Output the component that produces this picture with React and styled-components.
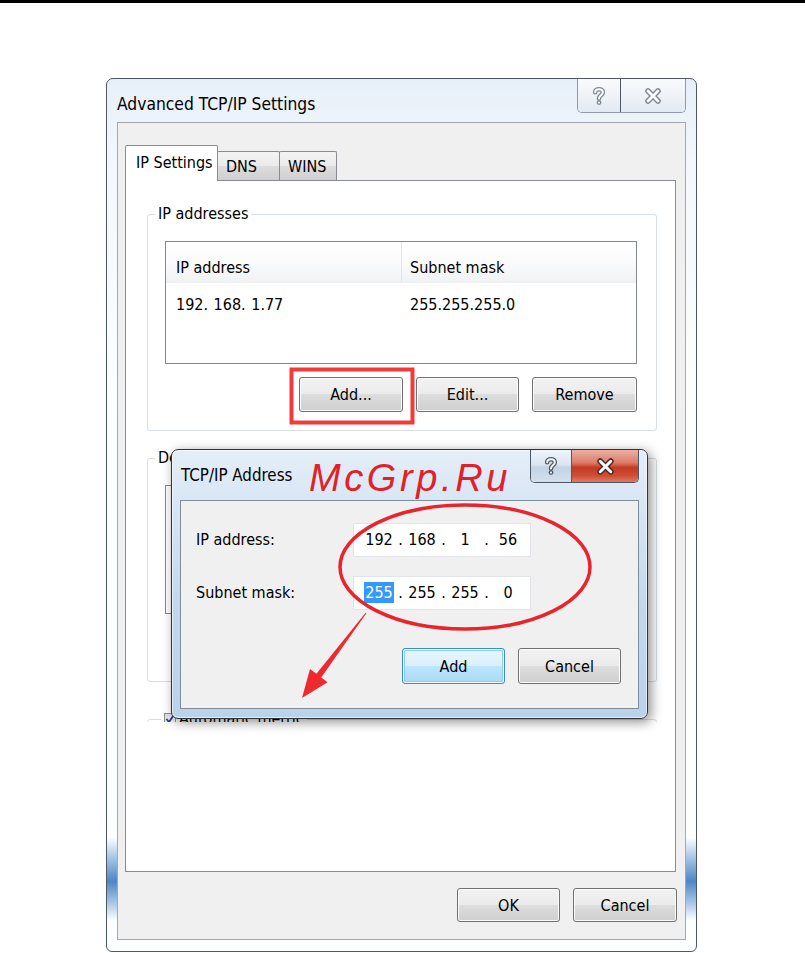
import React from "react";
import styled, { createGlobalStyle, css } from "styled-components";

const UI = `"DejaVu Sans Condensed", "Liberation Sans", sans-serif`;
const FS = 16;

const GlobalStyle = createGlobalStyle`
  html, body { margin: 0; padding: 0; background: #fff; }
  body { font-family: ${UI}; color: #000; }
  * { box-sizing: border-box; }
`;

const Page = styled.div`
  position: relative;
  width: 805px;
  height: 953px;
  overflow: hidden;
  background: #fff;
`;

const TopRule = styled.div`
  height: 3px;
  background: #000;
`;

const Window = styled.div`
  margin: 75px 0 0 106px;
  width: 591px;
  border: 1px solid #4e5863;
  border-radius: 7px 7px 6px 6px;
  padding: 0 10px 11px 10px;
  background: linear-gradient(
    180deg,
    #e6eff8 0%,
    #f4f8fc 10%,
    #fdfeff 40%,
    #fdfeff 87%,
    #9fc1e3 89.5%,
    #4f86c2 92%,
    #a9c7e6 94.5%,
    #fdfeff 96.5%
  );
`;

const TitleBar = styled.div`
  height: 43px;
  display: flex;
  justify-content: space-between;
  align-items: flex-start;
`;

const Title = styled.div`
  padding-top: 14px;
  line-height: 22px;
  font-size: ${(p) => p.$size || 17.3}px;
  white-space: nowrap;
`;

const CaptionGroup = styled.div`
  display: flex;
  height: ${(p) => p.$h}px;
  margin-right: ${(p) => p.$mr || 0}px;
  border: 1px solid ${(p) => (p.$active ? "#4c5866" : "#8f9aa6")};
  border-top: none;
  border-radius: 0 0 5px 5px;
  overflow: hidden;
`;

const CaptionButton = styled.div`
  width: ${(p) => p.$w}px;
  display: flex;
  align-items: center;
  justify-content: center;
  background: ${(p) =>
    p.$red
      ? "linear-gradient(180deg, #eab0a4 0%, #dd7b67 40%, #c43a22 55%, #cf4d36 80%, #e07a62 100%)"
      : p.$active
      ? "linear-gradient(180deg, #eef4fa 0%, #dbe6f1 45%, #c3d3e4 55%, #d3e0ed 100%)"
      : "linear-gradient(180deg, #f8fbfd 0%, #eef3f8 50%, #e2e9f1 100%)"};
  & + & {
    border-left: 1px solid ${(p) => (p.$active ? "#4c5866" : "#9aa5b0")};
  }
`;

const Client = styled.div`
  border: 1px solid #a2a9b1;
  background: #f0f0f0;
  padding: 22px 9px 17px 7px;
`;

const TabStrip = styled.div`
  display: flex;
  align-items: flex-end;
  position: relative;
  z-index: 1;
  margin-bottom: -1px;
  height: 36px;
`;

const Tab = styled.div`
  width: ${(p) => p.$w}px;
  border: 1px solid #898c95;
  border-bottom: none;
  border-radius: 2px 2px 0 0;
  font-size: ${FS}px;
  white-space: nowrap;
  ${(p) =>
    p.$active
      ? css`
          height: 36px;
          background: #fff;
          padding: 6px 0 0 10px;
          line-height: 22px;
        `
      : css`
          height: 29px;
          margin-bottom: 1px;
          margin-left: -1px;
          background: linear-gradient(180deg, #f3f3f3 0%, #ebebeb 50%, #dddddd 51%, #cfcfcf 100%);
          padding: 4px 0 0 8px;
          line-height: 22px;
        `}
`;

const TabPanel = styled.div`
  height: 692px;
  border: 1px solid #898c95;
  background: #fff;
`;

const PanelClip = styled.div`
  height: 541px;
  overflow: hidden;
  padding: 23px 18px 0 21px;
  display: flex;
  flex-direction: column;
`;

const Group = styled.fieldset`
  margin: ${(p) => p.$mt || 0}px 0 0 0;
  padding: 17px 19px 18px 17px;
  border: 1px solid #d5dfe5;
  border-radius: 3px;
  min-width: 0;
`;

const Legend = styled.legend`
  margin-left: ${(p) => p.$ml ?? -10}px;
  padding: 0 3px;
  line-height: 20px;
  font-size: ${FS}px;
  display: flex;
  align-items: center;
  gap: 3px;
`;

const ListView = styled.div`
  height: ${(p) => p.$h}px;
  border: 1px solid #828790;
  background: #fff;
`;

const ListHeader = styled.div`
  display: grid;
  grid-template-columns: 235px 1fr;
  height: 41px;
  background: linear-gradient(180deg, #ffffff 0%, #fbfbfc 50%, #f1f2f4 100%);
  border-bottom: 1px solid #eef0f2;
`;

const HeaderCell = styled.div`
  padding: 16px 0 0 ${(p) => p.$pl}px;
  line-height: 19px;
  font-size: ${FS}px;
  & + & {
    border-left: 1px solid #e2e4e7;
  }
`;

const ListRow = styled.div`
  display: grid;
  grid-template-columns: 235px 1fr;
  padding-top: 12px;
  line-height: 19px;
  font-size: ${FS}px;
`;

const RowCell = styled.div`
  padding-left: ${(p) => p.$pl}px;
  word-spacing: 1px;
`;

const ButtonRow = styled.div`
  display: flex;
  justify-content: flex-end;
  gap: 13px;
  margin-top: ${(p) => p.$mt || 0}px;
  padding-right: ${(p) => p.$pr || 0}px;
`;

const Button = styled.button`
  width: ${(p) => p.$w}px;
  height: ${(p) => p.$h || 35}px;
  padding: 0;
  font-family: ${UI};
  font-size: ${FS}px;
  color: #000;
  border: 1px solid #707070;
  border-radius: 3px;
  background: linear-gradient(180deg, #f2f2f2 0%, #ebebeb 49%, #dddddd 50%, #cfcfcf 100%);
  box-shadow: inset 0 0 0 1px #fcfcfc;
  ${(p) =>
    p.$default &&
    css`
      border-color: #3c8ec8;
      background: linear-gradient(180deg, #eaf6fd 0%, #d9f0fc 49%, #bee6fd 50%, #a7d9f5 100%);
      box-shadow: inset 0 0 0 1px #f4fbff, inset 0 0 0 2px #8fd0f2;
    `}
`;

const Footer = styled.div`
  display: flex;
  justify-content: flex-end;
  gap: 13px;
  margin: 16px -1px 0 0;
`;

const CheckBox = styled.span`
  width: 12px;
  height: 13px;
  border: 1px solid #8f8f8f;
  background: linear-gradient(135deg, #dcdcdc, #fff);
  display: inline-flex;
  align-items: center;
  justify-content: center;
`;

/* ---------- TCP/IP Address dialog ---------- */

const SubDialog = styled.div`
  position: absolute;
  left: 171px;
  top: 449px;
  width: 477px;
  height: 270px;
  border: 1px solid #2f3338;
  border-radius: 7px;
  padding: 0 8px 9px 8px;
  background: linear-gradient(180deg, #e4eef8 0%, #d2e2f2 30%, #c2d7ec 60%, #bad2ea 100%);
  box-shadow: 3px 3px 12px rgba(0, 0, 0, 0.45), inset 0 0 0 1px rgba(255, 255, 255, 0.6);
  display: flex;
  flex-direction: column;
`;

const SubTitleBar = styled.div`
  height: 50px;
  display: flex;
  justify-content: space-between;
  align-items: flex-start;
  padding-left: 1px;
`;

const SubClient = styled.div`
  flex: 1;
  border: 1px solid #7e8e9f;
  background: #f0f0f0;
  padding: 22px 17px 0 15px;
`;

const FieldGrid = styled.div`
  display: grid;
  grid-template-columns: 157px 178px;
  row-gap: 19px;
  align-items: center;
`;

const FieldLabel = styled.div`
  font-size: ${FS}px;
  line-height: 22px;
`;

const IpBox = styled.div`
  width: 178px;
  height: 34px;
  background: #fff;
  border: 1px solid #e3e4ea;
  display: flex;
  align-items: center;
  padding-left: 8px;
  font-size: ${FS}px;
  line-height: 22px;
`;

const Octet = styled.span`
  width: 34px;
  text-align: center;
`;

const Dot = styled.span`
  width: 9px;
  text-align: center;
`;

const Selected = styled.span`
  background: #3399ff;
  color: #fff;
  padding: 1px 1px;
`;

const Watermark = styled.div`
  position: absolute;
  left: 309px;
  top: 459px;
  font-family: "Liberation Sans", Arial, sans-serif;
  font-style: italic;
  font-size: 38px;
  line-height: 38px;
  letter-spacing: 3.6px;
  color: #e3202a;
  white-space: nowrap;
`;

const Overlay = styled.svg`
  position: absolute;
  left: 0;
  top: 0;
  pointer-events: none;
`;

/* ---------- icons ---------- */

const HelpGlyph = ({ outline = "#6b7683", fill = "#fff", s = 1 }) => (
  <svg width={14 * s} height={20 * s} viewBox="0 0 14 20">
    <path d="M3.2 6.2 C3.2 2.2 10.8 2.2 10.8 6.2 C10.8 9.4 7 9.2 7 12.6" fill="none" stroke={outline} strokeWidth="4.6" strokeLinecap="round" />
    <circle cx="7" cy="16.6" r="2.4" fill={outline} />
    <path d="M3.2 6.2 C3.2 2.2 10.8 2.2 10.8 6.2 C10.8 9.4 7 9.2 7 12.6" fill="none" stroke={fill} strokeWidth="2" strokeLinecap="round" />
    <circle cx="7" cy="16.6" r="1.1" fill={fill} />
  </svg>
);

const CloseGlyph = ({ outline = "#6b7683", fill = "#fff", size = 14 }) => (
  <svg width={size + 4} height={size + 2} viewBox="0 0 18 16">
    <path d="M4 3 L14 13 M14 3 L4 13" fill="none" stroke={outline} strokeWidth="5.6" strokeLinecap="round" />
    <path d="M4 3 L14 13 M14 3 L4 13" fill="none" stroke={fill} strokeWidth="2.8" strokeLinecap="round" />
  </svg>
);

const CheckMark = () => (
  <svg width="10" height="10" viewBox="0 0 10 10">
    <path d="M1.5 5 L4 8 L8.5 1.5" fill="none" stroke="#1f3f8f" strokeWidth="1.8" />
  </svg>
);

const IpValue = ({ parts, selectFirst }) => (
  <IpBox>
    {parts.map((p, i) => (
      <React.Fragment key={i}>
        {i > 0 && <Dot>.</Dot>}
        <Octet>{i === 0 && selectFirst ? <Selected>{p}</Selected> : p}</Octet>
      </React.Fragment>
    ))}
  </IpBox>
);

export default function App() {
  return (
    <>
      <GlobalStyle />
      <Page>
        <TopRule />
        <Window>
          <TitleBar>
            <Title>Advanced TCP/IP Settings</Title>
            <CaptionGroup $h={34}>
              <CaptionButton $w={42}>
                <HelpGlyph outline="#7d8793" />
              </CaptionButton>
              <CaptionButton $w={65}>
                <CloseGlyph outline="#7d8793" />
              </CaptionButton>
            </CaptionGroup>
          </TitleBar>
          <Client>
            <TabStrip>
              <Tab $active $w={93}>IP Settings</Tab>
              <Tab $w={63}>DNS</Tab>
              <Tab $w={58}>WINS</Tab>
            </TabStrip>
            <TabPanel>
              <PanelClip>
                <Group>
                  <Legend>IP addresses</Legend>
                  <ListView $h={123}>
                    <ListHeader>
                      <HeaderCell $pl={10}>IP address</HeaderCell>
                      <HeaderCell $pl={8}>Subnet mask</HeaderCell>
                    </ListHeader>
                    <ListRow>
                      <RowCell $pl={10}>192. 168. 1.77</RowCell>
                      <RowCell $pl={9}>255.255.255.0</RowCell>
                    </ListRow>
                  </ListView>
                  <ButtonRow $mt={13}>
                    <Button $w={104}>Add...</Button>
                    <Button $w={103}>Edit...</Button>
                    <Button $w={105}>Remove</Button>
                  </ButtonRow>
                </Group>
                <Group $mt={17}>
                  <Legend>Default gateways:</Legend>
                  <ListView $h={129} />
                  <ButtonRow $mt={14}>
                    <Button $w={104}>Add...</Button>
                    <Button $w={103}>Edit...</Button>
                    <Button $w={105}>Remove</Button>
                  </ButtonRow>
                </Group>
                <Group $mt={27}>
                  <Legend $ml={-4}>
                    <CheckBox>
                      <CheckMark />
                    </CheckBox>
                    Automatic metric
                  </Legend>
                </Group>
              </PanelClip>
            </TabPanel>
            <Footer>
              <Button $w={103} $h={34}>OK</Button>
              <Button $w={104} $h={34}>Cancel</Button>
            </Footer>
          </Client>
        </Window>

        <SubDialog>
          <SubTitleBar>
            <Title $size={16.8}>TCP/IP Address</Title>
            <CaptionGroup $h={33} $active>
              <CaptionButton $w={40} $active>
                <HelpGlyph outline="#4f5a66" fill="#f4f6f8" />
              </CaptionButton>
              <CaptionButton $w={67} $active $red>
                <CloseGlyph outline="#4a2a24" fill="#fff" size={15} />
              </CaptionButton>
            </CaptionGroup>
          </SubTitleBar>
          <SubClient>
            <FieldGrid>
              <FieldLabel>IP address:</FieldLabel>
              <IpValue parts={["192", "168", "1", "56"]} />
              <FieldLabel>Subnet mask:</FieldLabel>
              <IpValue parts={["255", "255", "255", "0"]} selectFirst />
            </FieldGrid>
            <ButtonRow $mt={38}>
              <Button $w={103} $h={36} $default>Add</Button>
              <Button $w={103} $h={36}>Cancel</Button>
            </ButtonRow>
          </SubClient>
        </SubDialog>

        <Watermark>McGrp.Ru</Watermark>

        <Overlay width="805" height="953" viewBox="0 0 805 953">
          <rect x="291.5" y="369.5" width="121" height="53" fill="none" stroke="#f23a3a" strokeWidth="4" />
          <ellipse cx="465" cy="567" rx="125" ry="62" fill="none" stroke="#e8242c" strokeWidth="3.5" />
          <polygon
            points="365.6,612.7 316.4,673.8 310,669 302,698 327.6,682.2 321.2,677.4 366.4,613.3"
            fill="#ee2a2f"
          />
        </Overlay>
      </Page>
    </>
  );
}
